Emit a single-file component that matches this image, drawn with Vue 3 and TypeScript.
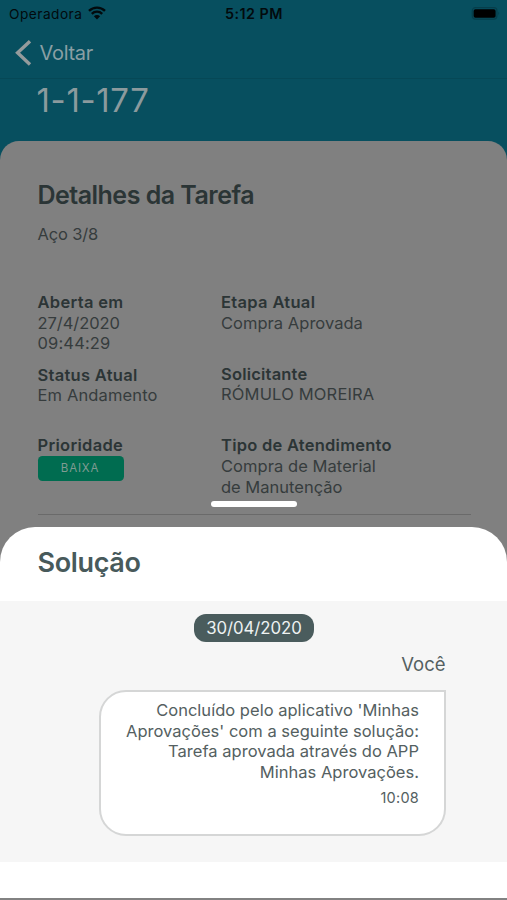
<script setup lang="ts">
interface Field {
  label: string
  lines: string[]
  labelSpacing: number
  spacing: number[]
}

const leftFields: Field[] = [
  { label: 'Aberta em', lines: ['27/4/2020', '09:44:29'], labelSpacing: 0.32, spacing: [-0.06, 0.15] },
  { label: 'Status Atual', lines: ['Em Andamento'], labelSpacing: 0.29, spacing: [0.13] },
]

const rightFields: Field[] = [
  { label: 'Etapa Atual', lines: ['Compra Aprovada'], labelSpacing: 0.32, spacing: [0.03] },
  { label: 'Solicitante', lines: ['RÓMULO MOREIRA'], labelSpacing: 0.2, spacing: [0.17] },
  {
    label: 'Tipo de Atendimento',
    lines: ['Compra de Material', 'de Manutenção'],
    labelSpacing: 0.25,
    spacing: [0.06, 0],
  },
]

const messageLines: string[] = [
  "Concluído pelo aplicativo 'Minhas",
  "Aprovações' com a seguinte solução:",
  'Tarefa aprovada através do APP',
  'Minhas Aprovações.',
]
</script>

<template>
  <div class="screen">
    <header class="top">
      <div class="status">
        <div class="carrier">
          <span>Operadora</span>
          <svg class="wifi" viewBox="0 0 18 14" width="18" height="14">
            <path d="M1 4.9A11.4 11.4 0 0 1 17 4.9" />
            <path d="M3.8 7.8A7.4 7.4 0 0 1 14.2 7.8" />
            <path class="dot" d="M5.9 10.2A4.4 4.4 0 0 1 12.1 10.2L9 13.4Z" />
          </svg>
        </div>
        <span class="clock">5:12 PM</span>
        <svg class="battery" viewBox="0 0 30 14" width="30" height="14">
          <rect class="shell" x="1.3" y="0.7" width="24.6" height="11.4" rx="3" />
          <rect x="2.6" y="2.2" width="22" height="8.6" rx="1.8" />
          <path class="cap" d="M27.4 4.5Q29 6.3 27.4 8.3Z" />
        </svg>
      </div>
      <nav class="nav">
        <svg viewBox="0 0 18 28" width="18" height="28">
          <path d="M16 2.2L3.6 13.8L16 25.4" />
        </svg>
        <span>Voltar</span>
      </nav>
      <h1>1-1-177</h1>
    </header>

    <main class="card">
      <h2>Detalhes da Tarefa</h2>
      <p class="subject">Aço 3/8</p>
      <div class="columns">
        <div class="column left">
          <section v-for="f in leftFields" :key="f.label" class="field">
            <h3 :style="{ letterSpacing: f.labelSpacing + 'px' }">{{ f.label }}</h3>
            <p v-for="(l, i) in f.lines" :key="l" :style="{ letterSpacing: f.spacing[i] + 'px' }">{{ l }}</p>
          </section>
          <section class="field">
            <h3 class="priority">Prioridade</h3>
            <span class="badge">BAIXA</span>
          </section>
        </div>
        <div class="column right">
          <section v-for="f in rightFields" :key="f.label" class="field">
            <h3 :style="{ letterSpacing: f.labelSpacing + 'px' }">{{ f.label }}</h3>
            <p v-for="(l, i) in f.lines" :key="l" :style="{ letterSpacing: f.spacing[i] + 'px' }">{{ l }}</p>
          </section>
        </div>
      </div>
      <hr />
    </main>

    <div class="overlay">
      <div class="grip"></div>
      <section class="sheet">
        <h2 class="sheet-title">Solução</h2>
        <div class="chat">
          <span class="date">30/04/2020</span>
          <span class="author">Você</span>
          <article class="bubble">
            <p v-for="l in messageLines" :key="l">{{ l }}</p>
            <time>10:08</time>
          </article>
        </div>
      </section>
    </div>
  </div>
</template>

<style>
body {
  background: #808080;
}
</style>

<style scoped>
.screen {
  position: relative;
  width: 507px;
  height: 900px;
  overflow: hidden;
  background: #074f5f;
  font-family: Inter, 'Liberation Sans', sans-serif;
  box-sizing: border-box;
}
h1,
h2,
h3,
p {
  margin: 0;
}
.top {
  height: 141px;
}
.status {
  display: grid;
  grid-template-columns: 1fr auto 1fr;
  align-items: center;
  height: 28px;
  padding: 0 6px 0 9px;
  font-size: 13.7px;
  color: #020a0d;
}
.carrier {
  display: flex;
  align-items: center;
  gap: 6px;
  letter-spacing: 0.48px;
}
.clock {
  margin: -2px 2px 0 0;
  font-size: 14.3px;
  font-weight: 600;
  letter-spacing: 0.5px;
}
.wifi {
  margin-top: -3px;
  fill: none;
  stroke: #020a0d;
  stroke-width: 2.4;
}
.wifi .dot {
  fill: #020a0d;
  stroke: none;
}
.battery {
  justify-self: end;
  fill: #000;
}
.battery .shell {
  fill: none;
  stroke: #063e4b;
  stroke-width: 1.2;
}
.battery .cap {
  fill: #063e4b;
}
.nav {
  display: flex;
  align-items: center;
  height: 50px;
  padding-left: 14px;
  gap: 7.5px;
  border-bottom: 1px solid #064856;
  color: #8a9fa4;
  font-size: 20px;
  letter-spacing: -0.3px;
}
.nav svg {
  fill: none;
  stroke: #959b9c;
  stroke-width: 3.4;
}
h1 {
  margin: 0 0 0 36.5px;
  font-size: 33px;
  font-weight: 400;
  line-height: 42px;
  letter-spacing: 0.65px;
  color: #8b9a9d;
}
.card {
  height: 759px;
  padding: 0 36.5px 0 37.5px;
  box-sizing: border-box;
  border-radius: 19px 19px 0 0;
  background: #808080;
  color: #363c3d;
}
.card h2 {
  padding-top: 38px;
  font-size: 25px;
  line-height: 32px;
  font-weight: 600;
  letter-spacing: -0.52px;
  color: #2b3536;
}
.subject {
  margin-top: 13px;
  font-size: 16.5px;
  line-height: 21px;
  letter-spacing: -0.16px;
}
.columns {
  display: flex;
  height: 221.5px;
  margin-top: 47px;
}
.column {
  display: flex;
  flex-direction: column;
}
.left {
  width: 183.5px;
  gap: 11px;
}
.left .field:nth-child(2) {
  margin-bottom: 18px;
}
.right {
  gap: 30.5px;
}
.field h3,
.field p {
  font-size: 16.5px;
  line-height: 20.6px;
  white-space: nowrap;
}
.field h3 {
  font-weight: 600;
  color: #2c3536;
}
.field .priority {
  letter-spacing: 0.3px;
}
.badge {
  display: flex;
  align-items: center;
  justify-content: center;
  width: 86px;
  height: 25.5px;
  padding-right: 1px;
  box-sizing: border-box;
  border-radius: 4.5px;
  background: #006c50;
  color: #7f9b92;
  font-size: 11.5px;
  letter-spacing: 0.8px;
}
hr {
  height: 1px;
  margin: 0;
  border: 0;
  background: #6a6a6a;
}
.overlay {
  position: absolute;
  left: 0;
  right: 0;
  top: 501px;
}
.grip {
  width: 86px;
  height: 6px;
  margin: 0 auto;
  border-radius: 3px;
  background: #fff;
}
.sheet {
  height: 371px;
  margin-top: 19.5px;
  border-radius: 35px 35px 0 0;
  background: #fff;
  border-bottom: 2px solid #828282;
}
.sheet-title {
  height: 74.5px;
  padding-left: 37.5px;
  font-size: 27px;
  line-height: 71px;
  font-weight: 600;
  letter-spacing: -0.35px;
  color: #485a5b;
  box-sizing: border-box;
}
.chat {
  display: flex;
  flex-direction: column;
  align-items: flex-end;
  height: 260.5px;
  padding: 12.5px 61.5px 0 0;
  box-sizing: border-box;
  background: #f6f6f6;
  color: #546061;
}
.date {
  width: 120px;
  height: 28px;
  margin-right: 131.5px;
  border-radius: 12px;
  background: #4a5c5d;
  color: #eef2f2;
  font-size: 16.8px;
  line-height: 28px;
  letter-spacing: -0.08px;
  text-align: center;
}
.author {
  margin-top: 10.5px;
  font-size: 18.5px;
  line-height: 24px;
}
.bubble {
  width: 347px;
  height: 146px;
  margin-top: 14.3px;
  padding: 7.9px 24.5px 0 0;
  box-sizing: border-box;
  border: 2.5px solid #d5d6d6;
  border-radius: 27px 0 27px 27px;
  background: #fff;
  text-align: right;
}
.bubble p {
  font-size: 16.5px;
  line-height: 20.5px;
  letter-spacing: 0.02px;
  white-space: nowrap;
}
.bubble time {
  display: block;
  margin-top: 7px;
  font-size: 14.5px;
  line-height: 18px;
  letter-spacing: 0.25px;
}
</style>
